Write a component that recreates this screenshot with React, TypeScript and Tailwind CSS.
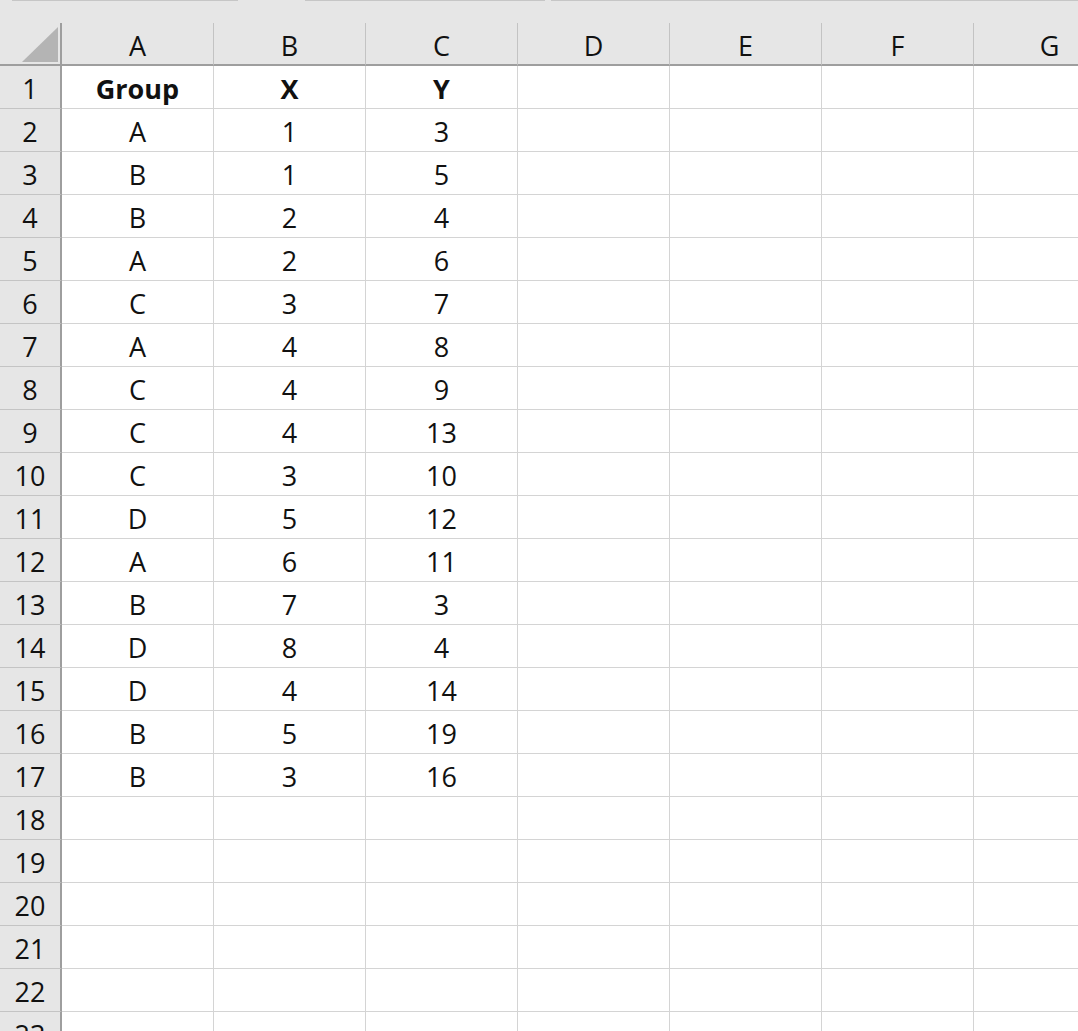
const columns = ['A', 'B', 'C', 'D', 'E', 'F', 'G']

const data: [string, string, string][] = [
  ['A', '1', '3'],
  ['B', '1', '5'],
  ['B', '2', '4'],
  ['A', '2', '6'],
  ['C', '3', '7'],
  ['A', '4', '8'],
  ['C', '4', '9'],
  ['C', '4', '13'],
  ['C', '3', '10'],
  ['D', '5', '12'],
  ['A', '6', '11'],
  ['B', '7', '3'],
  ['D', '8', '4'],
  ['D', '4', '14'],
  ['B', '5', '19'],
  ['B', '3', '16'],
]

const rowCount = 23

function cellValue(row: number, col: number): string {
  if (row === 1) return ['Group', 'X', 'Y'][col] ?? ''
  const r = data[row - 2]
  if (!r) return ''
  return r[col] ?? ''
}

export default function App() {
  const rows = Array.from({ length: rowCount }, (_, i) => i + 1)

  return (
    <div className="w-[1078px] h-[1031px] overflow-hidden bg-white text-[27px] text-[#111] font-['Open_Sans',sans-serif]">
      {/* strip above the column headers */}
      <div className="h-[23px] bg-[#e6e6e6] flex">
        <div className="w-[12px]" />
        <div className="w-[226px] h-[1px] bg-[#c6c6c6]" />
        <div className="w-[67px]" />
        <div className="w-[240px] h-[1px] bg-[#c6c6c6]" />
        <div className="w-[6px]" />
        <div className="flex-1 h-[1px] bg-[#c6c6c6]" />
      </div>

      <div className="grid grid-cols-[62px_repeat(7,152px)]">
        {/* select-all corner */}
        <div className="h-[43px] bg-[#e6e6e6] border-r-2 border-b-2 border-[#9e9e9e] flex items-end justify-end pr-[2px] pb-[2px]">
          <svg width="36" height="35" viewBox="0 0 36 35">
            <polygon points="0,35 36,35 36,0" fill="#b4b4b4" />
          </svg>
        </div>
        {columns.map(c => (
          <div key={c}
            className="h-[43px] bg-[#e6e6e6] border-r border-[#c3c3c3] border-b-2 border-b-[#9e9e9e] flex items-center justify-center pt-[3px] leading-none">
            {c}
          </div>
        ))}

        {rows.map(r => (
          <div key={r} className="contents">
            <div className="h-[43px] bg-[#e6e6e6] border-r-2 border-r-[#9e9e9e] border-b border-b-[#c4c4c4] flex items-center justify-center pt-[3px] leading-none">
              {r}
            </div>
            {columns.map((c, ci) => (
              <div key={c}
                className={`h-[43px] border-r border-b border-[#d4d4d4] flex items-center justify-center pt-[3px] leading-none ${r === 1 ? 'font-bold' : ''}`}>
                {ci < 3 ? cellValue(r, ci) : ''}
              </div>
            ))}
          </div>
        ))}
      </div>
    </div>
  )
}
